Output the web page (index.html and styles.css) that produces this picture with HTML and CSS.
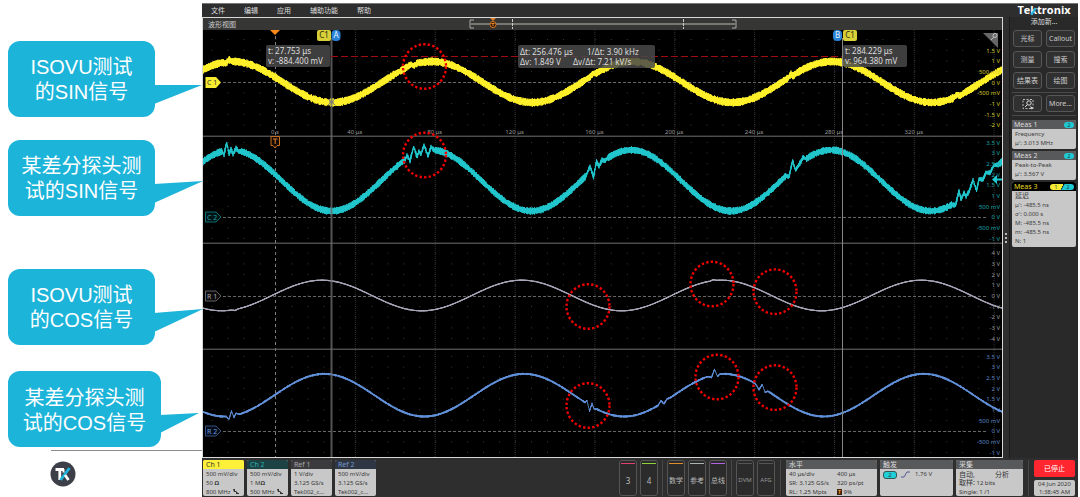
FILE: index.html
```html
<!DOCTYPE html>
<html lang="zh-CN">
<head>
<meta charset="utf-8">
<title>Tektronix 波形视图</title>
<link rel="stylesheet" href="styles.css">
</head>
<body>
<div class="slide">
  <aside class="notes">
    <div class="note">ISOVU测试<br>的SIN信号
      <svg class="note-tail" viewBox="0 0 50 24"><path d="M0 4H48L0 23Z"/></svg>
    </div>
    <div class="note note-second">某差分探头测<br>试的SIN信号
      <svg class="note-tail" viewBox="0 0 50 24"><path d="M0 4L49 1L0 23Z"/></svg>
    </div>
    <div class="note note-third">ISOVU测试<br>的COS信号
      <svg class="note-tail" viewBox="0 0 50 24"><path d="M0 4L49 0L0 23Z"/></svg>
    </div>
    <div class="note note-wide">某差分探头测<br>试的COS信号
      <svg class="note-tail" viewBox="0 0 50 24"><path d="M0 4L39 2L0 22Z"/></svg>
    </div>
    <div class="brand-foot">
      <svg width="26" height="26" viewBox="0 0 26 26" role="img" aria-label="TK">
        <circle cx="13" cy="13" r="12.5" fill="#3c3e48"/>
        <path d="M5.500 8.500H14M9.800 8V19" stroke="#fff" stroke-width="2.800" fill="none"/>
        <path d="M19.500 7L10.500 19" stroke="#1fb4dc" stroke-width="2.800"/>
        <path d="M15 14L18.500 19" stroke="#fff" stroke-width="2.800"/>
        <path d="M13.500 8V11.500" stroke="#fff" stroke-width="2"/>
      </svg>
    </div>
  </aside>

  <main class="scope">
    <nav class="menu">
      <button>文件</button><button>编辑</button><button>应用</button><button>辅助功能</button><button>帮助</button>
    </nav>
    <div class="workspace">
      <section class="view">
        <header class="view-head">
          <span>波形视图</span>
          <svg width="268" height="12" viewBox="0 0 268 12" fill="none">
            <path d="M2 6H266" stroke="#777773" stroke-width="2"/>
            <path d="M5 2H1V10H5M263 2H267V10H263" stroke="#aaa"/>
            <path d="M43.500 1V11M214.500 1V11" stroke="#ccc" stroke-dasharray="3 1"/>
            <path d="M21 0H27L24 3Z" fill="#e07c22"/>
            <circle cx="24" cy="6.500" r="3" fill="#2a1704" stroke="#d8781f"/>
            <path d="M22.500 5.500H25.500M24 5.500V8" stroke="#f09030"/>
          </svg>
          <span></span>
        </header>
        <svg id="plot" class="plot" viewBox="203 30 799 427">
          <g id="grid"></g>
          <g id="waves"></g>
          <g id="scales"></g>
          <g fill="none">
            <path d="M331.500 38V457" stroke="#6a6a6a" stroke-width="2" opacity=".8"/>
            <path d="M842.500 38V457" stroke="#858585"/>
            <path d="M331 56.500H842" stroke="#a00c10" stroke-dasharray="7 3"/>
            <path d="M328 99L335 105M335 99L328 105M329 102H334" stroke="#777"/>
          </g>
          <path d="M270 30H280L275 35Z" fill="#ff8a1c"/>
          <path d="M271 136.500H279.500V145.500H277L275 148L273 145.500H271Z" fill="#140a02" stroke="#c8701f"/>
          <path d="M273 139H277.500M275.200 139V144" stroke="#e08030" fill="none"/>
          <g>
            <path d="M205.500 77H216L221 82.500L216 88H205.500Z" fill="#f7ec30"/>
            <text class="badge" x="207" y="85" fill="#333">C 1</text>
            <path d="M205.500 212H216L221 217L216 222H205.500Z" fill="#001416" stroke="#0e6d70"/>
            <text class="badge" x="207" y="220" fill="#1ea5aa">C 2</text>
            <path d="M205.500 291H216L221 296L216 301H205.500Z" fill="#0c0c0c" stroke="#626268"/>
            <text class="badge" x="207" y="299" fill="#a9a9b0">R 1</text>
            <path d="M205.500 426H216L221 431L216 436H205.500Z" fill="#060d18" stroke="#35527e"/>
            <text class="badge" x="207" y="434" fill="#6c9de0">R 2</text>
          </g>
          <path d="M983 33H998V48Z" fill="#666"/>
          <g fill="none" stroke="#c4c4c4"><circle cx="995" cy="35.500" r="2"/><path d="M993.500 37.300L991 40"/></g>
          <path d="M992 179.500L997 175V178.500H1002V180.500H997V184Z" fill="#20cbd2"/>
          <g>
            <rect x="317" y="30" width="14" height="11" rx="2" fill="#d9d039"/>
            <text class="flag mid" x="324" y="38" fill="#2c2b10">C1</text>
            <rect x="331.500" y="30" width="9" height="11" rx="4" fill="#2883d6"/>
            <text class="flag mid" x="336" y="38" fill="#e8f2ff">A</text>
            <rect x="833" y="30" width="9" height="11" rx="4" fill="#2883d6"/>
            <text class="flag mid" x="837.500" y="38" fill="#e8f2ff">B</text>
            <rect x="843" y="30" width="14" height="11" rx="2" fill="#d9d039"/>
            <text class="flag mid" x="850" y="38" fill="#2c2b10">C1</text>
          </g>
          <g fill="#484848" fill-opacity=".86">
            <rect x="266" y="45" width="64" height="22" rx="2"/>
            <rect x="518" y="45" width="137" height="23" rx="2"/>
            <rect x="843" y="45" width="64" height="22" rx="2"/>
          </g>
          <g class="readout">
            <text x="268" y="54">t: 27.753 μs</text><text x="268" y="64">v: -884.400 mV</text>
            <text x="520" y="55">Δt: 256.476 μs</text><text x="587" y="55">1/Δt: 3.90 kHz</text>
            <text x="520" y="65">Δv: 1.849 V</text><text x="573" y="65">Δv/Δt: 7.21 kV/s</text>
            <text x="845" y="54">t: 284.229 μs</text><text x="845" y="64">v: 964.380 mV</text>
          </g>
          <g id="marks"></g>
        </svg>
      </section>

      <div class="grip"><i></i><i></i><i></i></div>
      <aside class="panel">
        <div class="logo">Te<span class="logo-k">k<svg class="logo-slash" viewBox="0 0 6 9"><path d="M1 8L5 2" stroke="#25b7e0" stroke-width="2"/></svg></span>tronix</div>
        <div class="panel-title">添加新...</div>
        <div class="tools">
          <button>光标</button><button>Callout</button>
          <button>测量</button><button>搜索</button>
          <button>结果表</button><button>绘图</button>
        </div>
        <div class="tools tools-extra">
          <button aria-label="缩放">
            <svg width="12" height="12" viewBox="0 0 12 12" fill="none" stroke="#bbb">
              <path d="M1 1.500H11V10.500H1Z" stroke-dasharray="2 1.500"/>
              <circle cx="7" cy="5" r="2.200" stroke="#ddd"/><path d="M5.500 6.500L3 9" stroke="#ddd"/>
              <path d="M8 8L11.500 10L9.500 11.500Z" fill="#ddd" stroke="none"/>
            </svg>
          </button><button>More...</button>
        </div>
        <article class="meas">
          <h3>Meas 1<b class="pill">2</b></h3>
          <p>Frequency<br>μ': 3.013 MHz</p>
        </article>
        <article class="meas">
          <h3>Meas 2<b class="pill">2</b></h3>
          <p>Peak-to-Peak<br>μ': 3.567 V</p>
        </article>
        <article class="meas meas-active">
          <h3>Meas 3<b class="pill pill-pair"><span>1</span><span>2</span></b></h3>
          <p><span class="name">延迟</span><br>μ': -485.5 ns<br>σ': 0.000 s<br>M: -485.5 ns<br>m: -485.5 ns<br>N: 1</p>
        </article>
      </aside>
    </div>

    <footer class="status">
      <article class="card ch ch-yellow"><h3>Ch 1</h3><p>500 mV/div<br>50 <b>Ω</b><br>800 MHz <svg class="bw" viewBox="0 0 6 5"><path d="M0 0H2V2H3L5 4H6V5H3V3H1Z" fill="#333"/></svg></p></article>
      <article class="card ch ch-cyan"><h3>Ch 2</h3><p>500 mV/div<br>1 M<b>Ω</b><br>500 MHz <svg class="bw" viewBox="0 0 6 5"><path d="M0 0H2V2H3L5 4H6V5H3V3H1Z" fill="#333"/></svg></p></article>
      <article class="card ch ch-ref"><h3>Ref 1</h3><p>1 V/div<br>3.125 GS/s<br>Tek002_c...</p></article>
      <article class="card ch ch-blue"><h3>Ref 2</h3><p>500 mV/div<br>3.125 GS/s<br>Tek002_c...</p></article>
      <div class="spacer"></div>
      <button class="slot slot-red slot-num">3</button>
      <button class="slot slot-green slot-num">4</button>
      <i class="rule"></i>
      <button class="slot slot-orange">数学</button>
      <button class="slot slot-grey">参考</button>
      <button class="slot slot-violet">总线</button>
      <i class="rule"></i>
      <button class="slot slot-off">DVM</button>
      <button class="slot slot-off">AFG</button>
      <i class="rule rule-wide"></i>
      <article class="card card-horizontal"><h3>水平</h3>
        <div class="pairs"><span>40 μs/div</span><span>400 μs</span><span>SR: 3.125 GS/s</span><span>320 ps/pt</span><span>RL: 1.25 Mpts</span><span><em>T</em> 9%</span></div>
      </article>
      <article class="card card-trigger"><h3>触发</h3>
        <div class="trigger"><b class="source">2</b><svg width="9" height="7" viewBox="0 0 9 7"><path d="M0 6H3L6 1H9" fill="none" stroke="#55559a"/></svg><span>1.76 V</span></div>
      </article>
      <article class="card card-acquire"><h3>采集</h3>
        <div class="split"><span>自动,</span><span>分析</span></div>
        <p><span class="name">取样:</span> 12 bits<br>Single: 1 /1</p>
      </article>
      <i class="rule rule-wide"></i>
      <div class="run">
        <button class="stop">已停止</button>
        <time class="clock">04 Jun 2020<br>1:38:45 AM</time>
      </div>
    </footer>
  </main>
</div>
<script src="plot.js"></script>
</body>
</html>
```

FILE: styles.css
```css
* { box-sizing: border-box; }
body {
  margin: 0;
  background: #fff;
  font-family: "Noto Sans", "Noto Sans CJK SC", sans-serif;
}
button { font: inherit; padding: 0; border: 0; background: none; color: inherit; }
h3, p { margin: 0; font-weight: 400; }
i { display: block; }

.slide { display: flex; min-height: 100vh; }

/* Annotations beside the instrument */
.notes {
  flex: 0 0 202px;
  display: flex;
  flex-direction: column;
  padding: 41px 0 0 8px;
}
.note {
  position: relative;
  z-index: 2;
  width: 147px;
  height: 76px;
  padding-top: 14px;
  border-radius: 12px;
  background: #1db4da;
  color: #fff;
  font: 20px/25px "Liberation Sans", "Noto Sans CJK SC", sans-serif;
  text-align: center;
  white-space: nowrap;
}
.note-second { margin-top: 23px; }
.note-third { margin-top: 53px; }
.note-wide { width: 153px; margin-top: 26px; padding-top: 15px; }
.note-tail {
  position: absolute;
  left: 100%;
  top: 40px;
  width: 50px;
  height: 24px;
  margin-left: -1px;
  fill: #1db4da;
}
.brand-foot {
  margin: 3px 0 0 43px;
  padding-top: 10px;
  border-top: 1px solid #8c8c8c;
}
.brand-foot svg { display: block; margin-left: -1px; }

/* Instrument */
.scope {
  flex: 1;
  min-width: 0;
  display: flex;
  flex-direction: column;
  margin: 3px 2px 0 0;
  background: #2e2e2e;
  border-top: 1px solid #777;
}
.menu {
  display: flex;
  gap: 19px;
  height: 13px;
  padding-left: 9px;
  color: #ddd;
  font-size: 7px;
  line-height: 12px;
}
.workspace { display: flex; }
.view {
  flex: 1;
  min-width: 0;
  border: 1px solid #d8d8d8;
}
.view-head {
  display: grid;
  grid-template-columns: 1fr auto 1fr;
  align-items: center;
  height: 12px;
  background: #363634;
  color: #ccc;
  font-size: 7px;
  line-height: 11px;
}
.view-head span { padding-left: 5px; }
.view-head svg { display: block; }
.plot { display: block; width: 100%; height: auto; background: #000; }
.plot text { font-size: 6px; }
.plot .mid { text-anchor: middle; }
.plot .axis { text-anchor: end; }
.plot .badge { font-size: 7px; }
.plot .flag { font-size: 8px; }
.plot .readout text { font-size: 8px; fill: #ddd; }

.grip {
  flex: 0 0 6px;
  display: flex;
  flex-direction: column;
  justify-content: center;
  align-items: center;
  gap: 2px;
}
.grip i { width: 2px; height: 2px; background: #bbb; }

.panel {
  flex: 0 0 69px;
  display: flex;
  flex-direction: column;
  padding: 0 2px;
  background: #292929;
  border-left: 1px solid #1a1a1a;
}
.logo {
  align-self: center;
  margin-top: -14px;
  color: #fff;
  font: 700 11px/14px "Open Sans", sans-serif;
}
.logo-k { position: relative; }
.logo-slash { position: absolute; left: 0; bottom: 1px; width: 7px; height: 10px; }
.panel-title {
  color: #ddd;
  font-size: 7px;
  line-height: 10px;
  text-align: center;
}
.tools {
  display: grid;
  grid-template-columns: 1fr 1fr;
  gap: 4px;
  padding: 3px 1px;
  border-bottom: 1px solid #4a4a4a;
}
.tools-extra { margin-bottom: 4px; padding-top: 2px; }
.tools button {
  display: flex;
  align-items: center;
  justify-content: center;
  height: 17px;
  border: 1px solid #575757;
  border-radius: 3px;
  background: #303030;
  color: #ccc;
  font-size: 7px;
  line-height: 9px;
}
.meas {
  margin-bottom: 2px;
  border-radius: 2px;
  overflow: hidden;
  background: #c8c8c8;
  color: #3c3c3c;
}
.meas h3 {
  display: flex;
  justify-content: space-between;
  align-items: center;
  padding: 0 2px;
  background: #58595b;
  color: #ddd;
  font-size: 7px;
  line-height: 9px;
}
.meas p { padding: 1px 3px; font-size: 6px; line-height: 9px; }
.name { font-size: 7px; line-height: 8px; }
.meas-active h3 { background: #000; color: #e8dc20; }
.pill {
  width: 10px;
  border-radius: 3px;
  background: #20c8d2;
  color: #134;
  font-size: 5px;
  font-weight: 400;
  line-height: 6px;
  text-align: center;
}
.pill-pair {
  display: flex;
  justify-content: space-around;
  width: 24px;
  background: linear-gradient(120deg, #f5ec35 50%, #111 50%, #20c8d2 56%);
}

/* Status bar */
.status {
  display: flex;
  gap: 3px;
  height: 39px;
  padding: 2px 3px 0 1px;
}
.card {
  height: 36px;
  border-radius: 2px;
  overflow: hidden;
  background: #c8c8c8;
  color: #383838;
  font-size: 6px;
  line-height: 9px;
  white-space: nowrap;
}
.card h3 {
  padding: 0 3px;
  background: #58595b;
  color: #ddd;
  font-size: 7px;
  line-height: 9px;
}
.card p { padding: 0 3px; }
.ch { flex: 0 0 41px; }
.ch p { padding: 1px 3px 0; }
.ch-yellow h3 { background: #fff13a; color: #333; }
.ch-cyan h3 { background: #1d4244; color: #28b0b5; }
.ch-ref h3 { background: #3b3b3e; color: #aaa; }
.ch-blue h3 { background: #2e3643; color: #729bd4; }
.bw { width: 6px; height: 5px; margin-left: 1px; }
.spacer { flex: 1; }
.slot {
  flex: 0 0 18px;
  display: flex;
  flex-direction: column;
  align-items: center;
  height: 36px;
  padding-top: 2px;
  border: 1px solid #555;
  border-radius: 3px;
  background: #2b2b2b;
  color: #bbb;
  font-size: 7px;
  line-height: 9px;
  white-space: nowrap;
}
.slot::before {
  content: "";
  flex: none;
  width: 14px;
  height: 1px;
  margin-bottom: 12px;
  background: #555;
}
.slot-num { font-size: 8px; }
.slot-red::before { background: #e0406e; }
.slot-green::before { background: #8ed233; }
.slot-orange::before { background: #e08c2c; }
.slot-grey::before { background: #a9b5ac; }
.slot-violet::before { background: #b063e4; }
.slot-off { color: #999; font-size: 6px; }
.rule { width: 1px; height: 36px; margin: 0 1px; background: #484848; }
.rule-wide { margin: 0 2px; }
.card-horizontal { flex: 0 0 91px; }
.card-trigger { flex: 0 0 73px; }
.card-acquire { flex: 0 0 67px; }
.pairs { display: grid; grid-template-columns: 48px 1fr; padding: 1px 0 0 3px; }
.pairs em {
  padding: 0 1px;
  background: #3a230d;
  color: #ff9a30;
  font-size: 5px;
  font-style: normal;
  font-weight: 700;
}
.trigger { display: flex; align-items: center; gap: 4px; padding: 1px 3px; }
.source {
  width: 14px;
  border: 1px solid #355;
  border-radius: 3px;
  background: #20d0d8;
  font-size: 6px;
  font-weight: 400;
  line-height: 6px;
  text-align: center;
}
.trigger span { margin-left: 1px; }
.split { display: flex; justify-content: space-between; padding: 1px 14px 0 3px; font-size: 7px; }
.run { flex: 0 0 41px; display: flex; flex-direction: column; gap: 3px; }
.stop {
  height: 17px;
  border-radius: 2px;
  background: #ff2630;
  color: #fff;
  font-size: 7px;
  line-height: 9px;
}
.clock {
  border-radius: 2px;
  background: #c8c8c8;
  color: #383838;
  font-size: 6px;
  line-height: 8px;
  text-align: center;
}
```

FILE: plot.js
```js
const NS = 'http://www.w3.org/2000/svg';
const layer = (id) => document.getElementById(id);

function draw(parent, tag, attrs, text) {
  const el = document.createElementNS(NS, tag);
  for (const key in attrs) el.setAttribute(key, attrs[key]);
  if (text) el.textContent = text;
  parent.appendChild(el);
}

const grid = layer('grid');
const ROW = 10.67;
const bands = [
  { top: 30, bottom: 136, zero: 82, first: 50.3, color: '#cfc62a',
    labels: ['1.5 V', '1 V', '500 mV', '0 V', '-500 mV', '-1 V', '-1.5 V', '-2 V'] },
  { top: 136, bottom: 243, zero: 217, first: 142.4, color: '#18a2a8',
    labels: ['3.5 V', '3 V', '2.5 V', '2 V', '1.5 V', '1 V', '500 mV', '0 V', '-500 mV', '-1 V'] },
  { top: 243, bottom: 349, zero: 296, first: 253.2, color: '#96969e',
    labels: ['4 V', '3 V', '2 V', '1 V', '0 V', '-1 V', '-2 V', '-3 V', '-4 V'] },
  { top: 349, bottom: 457, zero: 431, first: 356.4, color: '#5a85c2',
    labels: ['3.5 V', '3 V', '2.5 V', '2 V', '1.5 V', '1 V', '500 mV', '0 V', '-500 mV', '-1 V'] }
];

for (let i = 0; i < 10; i++) {
  const x = 275.5 + i * 79.85;
  draw(grid, 'path', {
    d: `M${x} 30V457`, stroke: i ? '#303030' : '#808080', 'stroke-dasharray': i ? '1 1' : '3 3'
  });
}
for (const band of bands) {
  let dots = '';
  for (let y = band.first - ROW; y < band.bottom - 2; y += ROW) {
    if (y < band.top + 3) continue;
    for (let x = 211.6; x < 990; x += 15.97) dots += `M${x} ${y}h1`;
  }
  draw(grid, 'path', { d: dots, stroke: '#3c3c3c' });
  draw(grid, 'path', { d: `M223 ${band.zero + 0.5}H988`, stroke: '#666', 'stroke-dasharray': '3 2' });
  if (band.top > 30) draw(grid, 'path', { d: `M203 ${band.top + 0.2}H1002`, stroke: '#707070' });
  band.labels.forEach((label, i) => {
    draw(layer('scales'), 'text', { class: 'axis', x: 1000, y: band.first + i * ROW + 2.2, fill: band.color }, label);
  });
}
for (let i = 0; i < 9; i++) {
  draw(grid, 'text', { class: 'mid', x: 275 + i * 79.85, y: 133.5, fill: '#999' }, i ? `${i * 40} μs` : '0 s');
}

let seed = 7;
function random() {
  seed = (seed * 16807) % 2147483647;
  return seed / 2147483647;
}

// Glitches are [x, offset] pairs, joined linearly around the sine.
function offsetAt(x, glitches) {
  for (const group of glitches) {
    for (let i = 1; i < group.length; i++) {
      const [x0, y0] = group[i - 1];
      const [x1, y1] = group[i];
      if (x >= x0 && x <= x1) return { dy: y0 + (y1 - y0) * (x - x0) / (x1 - x0), inside: true };
    }
  }
  return { dy: 0, inside: false };
}

const waves = [
  { center: 82, amp: 20.5, peak: 832, half: 2.3, noise: 1.7, color: '#fff02a', thin: 2,
    glitches: [[[222, 0], [226, 1.5], [229, -2], [232, 0]], [[404, 0], [411, -1.5], [414, 1], [418, -1], [422, 0]],
      [[590, 0], [593, -1.5], [597, 0]], [[788, 0], [791, -2], [793, 1], [797, 0]], [[954, 0], [957, -2], [960, 1], [965, 0]]] },
  { center: 180.5, amp: 30.5, peak: 831, half: 1.9, noise: 1.8, color: '#20c6cc', thin: 0.8,
    glitches: [[[222, 0], [224, 4], [226.7, -8], [229, 4], [231, -1], [233, 4], [236, -2], [239, 1], [241, 0]],
      [[405, 0], [407, -3], [410, 4], [413.7, -8], [417, 4], [419, -1], [421, 3], [424, -6], [428, 6], [431, -3], [434, 0]],
      [[586, 0], [590, -6], [593.5, 8], [596.5, -5], [599, 2], [602, -2], [605, 1], [608, 0]],
      [[786, 0], [789, 4], [792.5, -9], [795.5, 3], [801, -1], [803, -4], [806, 0]],
      [[952, 0], [955.5, 3], [959, -9], [961, 1], [964, -3], [966, 2], [969, 0], [973, -8], [976.5, 6], [979, -3], [983, 1], [986, -3], [990, 1], [994, -3], [998, 0]]] },
  { center: 295.5, amp: 15.3, peak: 721.5, half: 0.4, noise: 0.2, color: '#aaa7ba', thin: 0.4,
    glitches: [[[232, 0], [235, 1], [238, 0]], [[710, 0], [713, -1], [717, 0]]] },
  { center: 395.2, amp: 21.3, peak: 724, half: 0.5, noise: 0.6, color: '#6190d8', thin: 0.3,
    glitches: [[[226, 0], [229, 3], [231.5, -5], [234, 2], [236, -2], [239, 0]],
      [[585, 0], [587, -3], [589.5, 6], [592, -3], [594, 1], [597, 0]],
      [[658, 0], [661, -3], [664, 2], [667, -1], [670, 0]],
      [[708, 0], [711.5, 2], [714.5, -5.5], [717.5, 2], [720, 0]],
      [[755, 0], [759, 4], [762.3, -3], [765, 3], [768, 0]]] }
];

for (const wave of waves) {
  let d = '';
  for (let x = 203; x <= 1002; x += 0.5) {
    const { dy, inside } = offsetAt(x, wave.glitches);
    const y = wave.center - wave.amp * Math.cos((x - wave.peak) / 199.8 * 2 * Math.PI) + dy;
    const spread = (inside ? wave.thin : wave.half) + wave.noise * random();
    d += `${d ? 'L' : 'M'}${x} ${(y - spread).toFixed(1)}V${(y + spread).toFixed(1)}`;
  }
  draw(layer('waves'), 'path', { d, fill: 'none', stroke: wave.color, 'stroke-linejoin': 'round' });
}

[[424.5, 66.5], [424.5, 155], [588, 306.5], [712, 284], [775, 291.7], [588, 405.5], [717, 377], [775, 387.6]]
  .forEach(([cx, cy]) => draw(layer('marks'), 'ellipse', {
    cx, cy, rx: 21.5, ry: 22.3, fill: 'none', stroke: '#f00000', 'stroke-width': 2.4, 'stroke-dasharray': '2.4 2.2'
  }));
```
